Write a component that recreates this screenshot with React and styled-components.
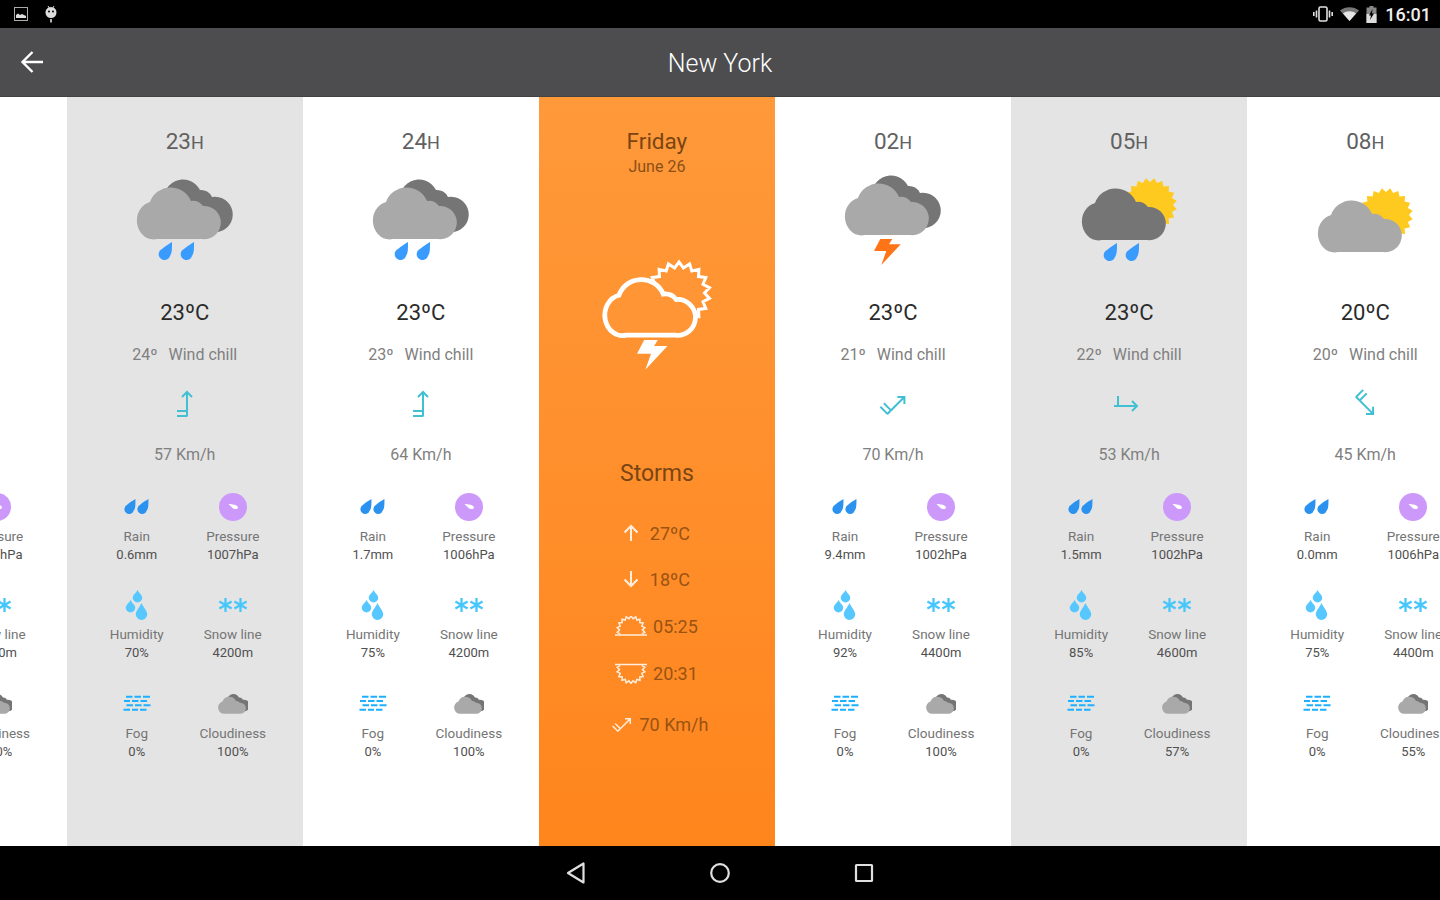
import React from "react";
import styled, { createGlobalStyle } from "styled-components";

const GlobalStyle = createGlobalStyle`
  html, body { margin: 0; padding: 0; background: #fff; }
  body { font-family: Roboto, "Liberation Sans", sans-serif; }
`;

const hours = [
  { hour: "22", tone: "white", kind: "rain", temp: "23", chill: "9", turn: 0, shift: 0, speed: 57, rain: "0.4mm", pressure: "1007hPa", humidity: "70%", snow: "4200m", fog: "0%", cloud: "100%" },
  { hour: "23", tone: "gray", kind: "rain", temp: "23", chill: "24", turn: 0, shift: 0, speed: 57, rain: "0.6mm", pressure: "1007hPa", humidity: "70%", snow: "4200m", fog: "0%", cloud: "100%" },
  { hour: "24", tone: "white", kind: "rain", temp: "23", chill: "23", turn: 0, shift: 0, speed: 64, rain: "1.7mm", pressure: "1006hPa", humidity: "75%", snow: "4200m", fog: "0%", cloud: "100%" },
  { day: true },
  { hour: "02", tone: "white", kind: "storm", temp: "23", chill: "21", turn: 45, shift: 1.5, speed: 70, rain: "9.4mm", pressure: "1002hPa", humidity: "92%", snow: "4400m", fog: "0%", cloud: "100%" },
  { hour: "05", tone: "gray", kind: "sunRain", temp: "23", chill: "22", turn: 90, shift: -4, speed: 53, rain: "1.5mm", pressure: "1002hPa", humidity: "85%", snow: "4600m", fog: "0%", cloud: "57%" },
  { hour: "08", tone: "white", kind: "sunCloud", temp: "20", chill: "20", turn: 135, shift: 1, speed: 45, rain: "0.0mm", pressure: "1006hPa", humidity: "75%", snow: "4400m", fog: "0%", cloud: "55%" },
];

// jagged sun outline, also used for the half suns of sunrise and sunset
const sunPoints = (cx, cy, outer, inner, teeth, from = 0, to = 360) => {
  const pts = [];
  const steps = teeth * 2;
  for (let i = 0; i <= steps; i++) {
    const a = ((from + ((to - from) * i) / steps) * Math.PI) / 180;
    const r = i % 2 ? outer : inner;
    pts.push(`${(cx + r * Math.cos(a)).toFixed(1)},${(cy + r * Math.sin(a)).toFixed(1)}`);
  }
  return pts.join(" ");
};

const roundDrop = (cx, top, w, h) => {
  const r = w / 2;
  const b = top + h - r;
  return `M${cx} ${top} C${cx + r * 0.3} ${top + h * 0.25} ${cx + r} ${b - r * 0.6} ${cx + r} ${b} A${r} ${r} 0 1 1 ${cx - r} ${b} C${cx - r} ${b - r * 0.6} ${cx - r * 0.3} ${top + h * 0.25} ${cx} ${top}Z`;
};

const FRONT_CLOUD = "M19 52A16.5 18.8 0 0 1 12 15A22 22 0 0 1 53 14A13 13 0 0 1 65 19A16.6 16.6 0 1 1 64 52Z";
const BACK_CLOUD = "M28 20A19 19 0 0 1 62 3A12 12 0 0 1 74 10A17.5 17.5 0 0 1 80 45L40 45Z";
const RAIN_DROP = "M12 0C12 8 12 11 10 14A5.8 5.8 0 1 1 2 7C5 4 9 2 12 0Z";
const BOLT = "6.3,0 18.3,0 15,5.3 26.7,5.3 7.3,26 12.3,12 0,12";

const WeatherIcon = ({ kind }) => {
  const top = { rain: 17, storm: 13, sunRain: 18, sunCloud: 30 }[kind];
  const hasSun = kind === "sunRain" || kind === "sunCloud";
  const hasDrops = kind === "rain" || kind === "sunRain";
  return (
    <WeatherSvg viewBox="0 0 130 100">
      <g transform={`translate(${hasSun ? 19 : 18} ${top})`}>
        {hasSun && <polygon points={sunPoints(67, kind === "sunRain" ? 17 : 15, 27, 23, 20)} fill="#ffca20" />}
        {!hasSun && <path d={BACK_CLOUD} fill="#757575" />}
        <path d={FRONT_CLOUD} fill={kind === "sunRain" ? "#757575" : "#a9a9a9"} />
        {hasDrops && (
          <>
            <path d={RAIN_DROP} transform="translate(22 55)" fill="#3a9bff" />
            <path d={RAIN_DROP} transform="translate(44 55)" fill="#3a9bff" />
          </>
        )}
        {kind === "storm" && <polygon points={BOLT} transform="translate(28 56)" fill="#ff7417" />}
      </g>
    </WeatherSvg>
  );
};

const WindArrow = ({ turn, shift = 0, color = "#40c0d2", size = 30 }) => (
  <svg width={size} height={size} viewBox="0 0 30 30" fill="none" stroke={color} strokeWidth="2">
    <g transform={`translate(${shift} 0) rotate(${turn} 15 15)`}>
      <path d="M17 27.5V3M12 8L17 3L22 8M7 22H17M7 27H17" />
    </g>
  </svg>
);

const RainIcon = () => (
  <svg width="30" height="30" viewBox="0 0 30 30" fill="#2b93ef">
    <path d={RAIN_DROP} transform="translate(3.5 7) scale(.83)" />
    <path d={RAIN_DROP} transform="translate(16.5 7) scale(.83)" />
  </svg>
);

const PressureIcon = () => (
  <svg width="30" height="30" viewBox="0 0 30 30">
    <circle cx="15" cy="15" r="14" fill="#cc99fb" />
    <path d="M10.5 12C14 12 20 13 20 15.5C20 17.5 16 17.5 14.5 16Z" fill="#fff" />
  </svg>
);

const HumidityIcon = () => (
  <svg width="30" height="30" viewBox="0 0 30 30" fill="#56c8ff">
    <path d={roundDrop(15.5, 0, 9.5, 12.5)} />
    <path d={roundDrop(8.5, 10, 9.5, 12.5)} />
    <path d={roundDrop(19.5, 13, 11.5, 17)} />
  </svg>
);

const Flake = ({ x }) => (
  <g transform={`translate(${x} 15)`}>
    <path d="M0 -7V7M-6.1 -3.5L6.1 3.5M-6.1 3.5L6.1 -3.5" />
  </g>
);

const SnowIcon = () => (
  <svg width="30" height="30" viewBox="0 0 30 30" stroke="#46c6fb" strokeWidth="2.3">
    <Flake x={7.5} />
    <Flake x={22.5} />
  </svg>
);

const FogIcon = () => (
  <svg width="30" height="30" viewBox="0 0 30 30" stroke="#1cb0ff" strokeWidth="2">
    <path d="M4 7.7H10.5M12.5 7.7H19M21 7.7H28" />
    <path d="M2 12H8M10 12H16.5M18.5 12H25" />
    <path d="M4.5 16.3H11M13 16.3H19.5M21.5 16.3H28.5" />
    <path d="M1.5 20.7H8M10 20.7H16M18 20.7H24.5" />
  </svg>
);

const CloudinessIcon = () => (
  <svg width="30" height="30" viewBox="0 0 30 30">
    <g transform="translate(0.5 7.5) scale(.33)">
      <path d={BACK_CLOUD} fill="#757575" />
      <path d={FRONT_CLOUD} fill="#a9a9a9" />
    </g>
  </svg>
);

const StatCell = ({ icon, label, value }) => (
  <Stat>
    <StatIcon>{icon}</StatIcon>
    <StatLabel>{label}</StatLabel>
    <StatValue>{value}</StatValue>
  </Stat>
);

const HourColumn = ({ data }) => (
  <Column $tone={data.tone}>
    <Hour>
      {data.hour}
      <small>H</small>
    </Hour>
    <WeatherIcon kind={data.kind} />
    <Temp>{data.temp}ºC</Temp>
    <Chill>
      <span>{data.chill}º</span>
      <span>Wind chill</span>
    </Chill>
    <ArrowBox>
      <WindArrow turn={data.turn} shift={data.shift} />
    </ArrowBox>
    <Speed>{data.speed} Km/h</Speed>
    <StatGrid>
      <StatCell icon={<RainIcon />} label="Rain" value={data.rain} />
      <StatCell icon={<PressureIcon />} label="Pressure" value={data.pressure} />
      <StatCell icon={<HumidityIcon />} label="Humidity" value={data.humidity} />
      <StatCell icon={<SnowIcon />} label="Snow line" value={data.snow} />
      <StatCell icon={<FogIcon />} label="Fog" value={data.fog} />
      <StatCell icon={<CloudinessIcon />} label="Cloudiness" value={data.cloud} />
    </StatGrid>
  </Column>
);

const CREAM = "#ffeedd";

const DayColumn = () => (
  <OrangeColumn>
    <DayName>Friday</DayName>
    <DayDate>June 26</DayDate>
    <DayIcon viewBox="0 0 130 120">
      <polygon points={sunPoints(87, 41, 31, 25.5, 18)} fill="#ff9535" stroke="#fff" strokeWidth="3" />
      <g transform="translate(14 27) scale(1.08)">
        <path d={FRONT_CLOUD} fill="#ff9535" stroke="#fff" strokeWidth="4.4" />
      </g>
      <polygon points={BOLT} transform="translate(45 88) scale(1.14)" fill="#fff" />
    </DayIcon>
    <Condition>Storms</Condition>
    <DayRow $top={32} $nudge={-3}>
      <svg width="20" height="20" viewBox="0 0 20 20" fill="none" stroke={CREAM} strokeWidth="2">
        <path d="M10 18V3M3.5 9.5L10 3L16.5 9.5" />
      </svg>
      <span>27ºC</span>
    </DayRow>
    <DayRow $top={22} $nudge={-3}>
      <svg width="20" height="20" viewBox="0 0 20 20" fill="none" stroke={CREAM} strokeWidth="2">
        <path d="M10 2V17M3.5 10.5L10 17L16.5 10.5" />
      </svg>
      <span>18ºC</span>
    </DayRow>
    <DayRow $top={23} $gap={6} $nudge={-1}>
      <svg width="32" height="21" viewBox="0 0 32 21" fill="none" stroke={CREAM} strokeWidth="1.5">
        <polyline points={sunPoints(16, 14, 14, 11.5, 11, 160, 380)} />
        <path d="M0 19H32" />
      </svg>
      <span>05:25</span>
    </DayRow>
    <DayRow $top={23} $gap={6} $nudge={-1}>
      <svg width="32" height="21" viewBox="0 0 32 21" fill="none" stroke={CREAM} strokeWidth="1.5">
        <polyline points={sunPoints(16, 6.5, 14, 11.5, 11, -20, 200)} />
        <path d="M0 1.5H32" />
      </svg>
      <span>20:31</span>
    </DayRow>
    <DayRow $top={27} $gap={5} $nudge={7}>
      <WindArrow turn={45} color={CREAM} size={22} />
      <span>70 Km/h</span>
    </DayRow>
  </OrangeColumn>
);

const App = () => {
  return (
    <>
      <GlobalStyle />
      <Screen>
        <StatusBar>
          <StatusGroup $gap={17}>
            <svg width="14" height="14" viewBox="0 0 14 14">
              <rect x="0.5" y="0.5" width="13" height="13" fill="none" stroke="#aaa" />
              <path d="M2 11V8L4 6.5L6 8L8 7L12 9V11Z" fill="#ddd" />
            </svg>
            <svg width="12" height="18" viewBox="0 0 12 18" fill="#ddd">
              <path d="M3 1L4.5 3.5M9 1L7.5 3.5" stroke="#ddd" />
              <circle cx="6" cy="7.5" r="5.5" />
              <circle cx="4" cy="6.5" r="1" fill="#000" />
              <circle cx="8" cy="6.5" r="1" fill="#000" />
              <rect x="5.2" y="14" width="1.6" height="3.5" />
            </svg>
          </StatusGroup>
          <StatusGroup $gap={7}>
            <svg width="20" height="16" viewBox="0 0 20 16" fill="none" stroke="#e0e0e0" strokeWidth="1.6">
              <rect x="6" y="1" width="8" height="14" rx="1.5" />
              <path d="M3.5 4.5V11.5M16.5 4.5V11.5M0.8 6V10M19.2 6V10" />
            </svg>
            <svg width="19" height="14" viewBox="0 0 19 14" fill="#e6e6e6">
              <path d="M0 3.5C5 -1 14 -1 19 3.5L9.5 14Z" fill="#777" />
              <path d="M3 6.5C6.5 3.5 12.5 3.5 16 6.5L9.5 14Z" />
            </svg>
            <svg width="11" height="17" viewBox="0 0 11 17" fill="#ddd">
              <path d="M3.5 0H7.5V1.5H10.5V17H0.5V1.5H3.5Z" fill="#888" />
              <path d="M0.5 8H10.5V17H0.5Z" />
              <path d="M6.5 3L3 9.5H5L4 14L8 7.5H6Z" fill="#000" />
            </svg>
            <Clock>16:01</Clock>
          </StatusGroup>
        </StatusBar>
        <Toolbar>
          <BackIcon width="24" height="24" viewBox="0 0 24 24" fill="none" stroke="#fff" strokeWidth="2.4">
            <path d="M23 12H3M12.5 2L2.5 12L12.5 22" />
          </BackIcon>
          <Title>New York</Title>
        </Toolbar>
        <Viewport>
          <Strip>
            {hours.map((h, i) => (h.day ? <DayColumn key={i} /> : <HourColumn key={i} data={h} />))}
          </Strip>
        </Viewport>
        <NavBar>
          <NavCell>
            <svg width="20" height="24" viewBox="0 0 20 24" fill="none" stroke="#e0e0e0" strokeWidth="2.2" strokeLinejoin="round">
              <path d="M17.5 2.5V21.5L2 12Z" />
            </svg>
          </NavCell>
          <NavCell>
            <svg width="22" height="22" viewBox="0 0 22 22" fill="none" stroke="#e0e0e0" strokeWidth="2.2">
              <circle cx="11" cy="11" r="8.8" />
            </svg>
          </NavCell>
          <NavCell>
            <svg width="20" height="20" viewBox="0 0 20 20" fill="none" stroke="#e0e0e0" strokeWidth="2.2">
              <rect x="2" y="2" width="16" height="16" rx="0.5" />
            </svg>
          </NavCell>
        </NavBar>
      </Screen>
    </>
  );
};

const Screen = styled.div`
  width: 1440px;
  height: 900px;
  display: flex;
  flex-direction: column;
  overflow: hidden;
`;

const StatusBar = styled.div`
  height: 28px;
  flex: none;
  background: #000;
  display: flex;
  align-items: center;
  justify-content: space-between;
  padding: 0 9px 0 14px;
`;

const StatusGroup = styled.div`
  display: flex;
  align-items: center;
  gap: ${({ $gap }) => $gap}px;
`;

const Clock = styled.span`
  color: #eee;
  font-size: 18px;
  font-weight: 500;
  margin-left: 1px;
`;

const Toolbar = styled.div`
  height: 69px;
  flex: none;
  box-sizing: border-box;
  padding-top: 2px;
  background: #4d4d4f;
  border-bottom: 1px solid #424244;
  display: flex;
  align-items: center;
  justify-content: center;
  position: relative;
`;

const BackIcon = styled.svg`
  position: absolute;
  left: 19.5px;
  top: 22px;
`;

const Title = styled.div`
  color: #fff;
  font-size: 25px;
  font-weight: 300;
`;

const Viewport = styled.div`
  flex: 1;
  overflow: hidden;
`;

const Strip = styled.div`
  display: flex;
  height: 100%;
  margin-left: -169.4px;
`;

const Column = styled.div`
  width: 236.1px;
  flex: none;
  box-sizing: border-box;
  padding-top: 29px;
  display: flex;
  flex-direction: column;
  align-items: center;
  background: ${({ $tone }) => ($tone === "gray" ? "#e4e4e4" : "#fff")};
`;

const Hour = styled.div`
  font-size: 22.5px;
  line-height: 30px;
  color: #616161;
  small {
    font-size: 18px;
  }
`;

const WeatherSvg = styled.svg`
  width: 130px;
  height: 100px;
  margin-top: 12px;
  flex: none;
`;

const Temp = styled.div`
  margin-top: 28px;
  font-size: 22px;
  line-height: 30px;
  color: #2b2b2b;
`;

const Chill = styled.div`
  margin-top: 15px;
  display: flex;
  gap: 11px;
  font-size: 16px;
  line-height: 24px;
  color: #808080;
`;

const ArrowBox = styled.div`
  margin-top: 22px;
  height: 30px;
`;

const Speed = styled.div`
  margin-top: 24px;
  font-size: 16px;
  line-height: 24px;
  color: #808080;
`;

const StatGrid = styled.div`
  margin-top: 25px;
  display: grid;
  grid-template-columns: 96px 96px;
  grid-template-rows: 98px 99px 71px;
`;

const Stat = styled.div`
  display: flex;
  flex-direction: column;
  align-items: center;
  white-space: nowrap;
`;

const StatIcon = styled.div`
  height: 30px;
  margin-bottom: 4.5px;
`;

const StatLabel = styled.div`
  font-size: 13.5px;
  line-height: 18px;
  color: #757575;
`;

const StatValue = styled.div`
  margin-top: 1px;
  font-size: 13px;
  line-height: 18px;
  color: #505050;
`;

const OrangeColumn = styled.div`
  width: 236.1px;
  flex: none;
  box-sizing: border-box;
  padding-top: 29px;
  display: flex;
  flex-direction: column;
  align-items: center;
  background: linear-gradient(#ff993a, #ff851d);
`;

const DayName = styled.div`
  font-size: 22.5px;
  line-height: 30px;
  color: #7a4514;
`;

const DayDate = styled.div`
  margin-top: 1px;
  font-size: 16px;
  line-height: 20px;
  color: #8a5018;
`;

const DayIcon = styled.svg`
  width: 130px;
  height: 120px;
  margin-top: 75px;
  flex: none;
`;

const Condition = styled.div`
  margin-top: 87px;
  font-size: 23px;
  line-height: 30px;
  color: #7a4514;
`;

const DayRow = styled.div`
  margin-top: ${({ $top }) => $top}px;
  margin-left: ${({ $nudge }) => $nudge ?? 0}px;
  height: 24px;
  display: flex;
  align-items: center;
  gap: ${({ $gap }) => $gap ?? 9}px;
  font-size: 18px;
  color: #995313;
`;

const NavBar = styled.div`
  height: 54px;
  flex: none;
  background: #000;
  display: grid;
  grid-template-columns: repeat(3, 144px);
  justify-content: center;
  align-items: center;
`;

const NavCell = styled.div`
  display: flex;
  justify-content: center;
  align-items: center;
`;

export default App;
